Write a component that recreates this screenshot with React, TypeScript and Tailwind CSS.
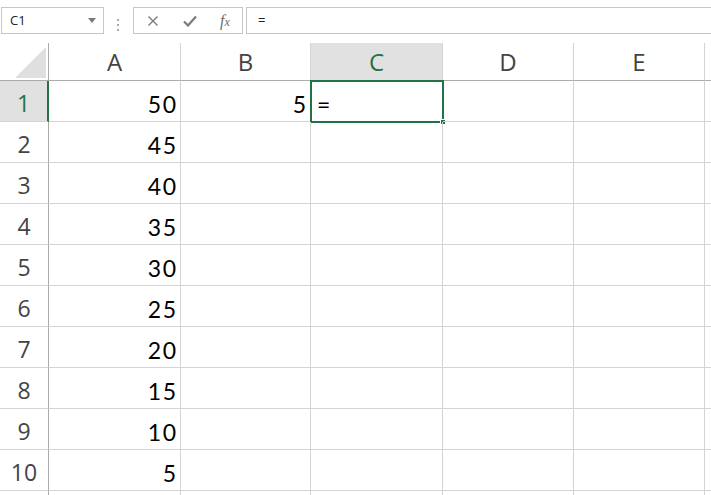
import React from "react";

const COLS = [
  { key: "A", w: "w-[132px]" },
  { key: "B", w: "w-[130px]" },
  { key: "C", w: "w-[132px]" },
  { key: "D", w: "w-[131px]" },
  { key: "E", w: "w-[131px]" },
  { key: "F", w: "w-[131px]" },
];

const VALUES = [50, 45, 40, 35, 30, 25, 20, 15, 10, 5];

const headFont = { fontFamily: '"Open Sans", "Noto Sans", sans-serif' };
const cellFont = { fontFamily: 'Lato, "Liberation Sans", sans-serif' };

function FormulaBar() {
  return (
    <div className="h-[43px] flex pt-[7px] bg-white">
      {/* Name box */}
      <div className="ml-[1px] w-[103px] h-[27px] border border-[#c6c6c6] flex items-center justify-between pl-[8px] pr-[7px]">
        <span className="text-[13px] text-[#222]" style={headFont}>
          C1
        </span>
        <svg width="8" height="5" viewBox="0 0 8 5">
          <path d="M0 0h8L4 5z" fill="#7a7a7a" />
        </svg>
      </div>
      {/* grip dots */}
      <div className="w-[29px] flex flex-col items-center justify-center gap-[3px] pr-[2px]">
        <span className="w-[2px] h-[2px] bg-[#a8a8a8]" />
        <span className="w-[2px] h-[2px] bg-[#a8a8a8]" />
        <span className="w-[2px] h-[2px] bg-[#a8a8a8]" />
      </div>
      {/* cancel / enter / fx */}
      <div className="w-[110px] h-[27px] border border-[#c6c6c6] flex items-center">
        <div className="w-[38px] flex justify-center">
          <svg width="12" height="12" viewBox="0 0 12 12">
            <path d="M1.5 1.5l9 9M10.5 1.5l-9 9" stroke="#7b7b7b" strokeWidth="1.4" fill="none" />
          </svg>
        </div>
        <div className="w-[36px] flex justify-center">
          <svg width="14" height="12" viewBox="0 0 14 12">
            <path d="M1 6.5l4 4L13 1.5" stroke="#7b7b7b" strokeWidth="2.2" fill="none" />
          </svg>
        </div>
        <div className="w-[34px] flex justify-center">
          <span
            className="text-[16px] italic text-[#6d6d6d] leading-none"
            style={{ fontFamily: '"Liberation Serif", serif' }}
          >
            f<span className="text-[12px]">x</span>
          </span>
        </div>
      </div>
      {/* formula input */}
      <div className="ml-[3px] flex-1 h-[27px] border-y border-l border-[#c6c6c6] flex items-center pl-[11px]">
        <span className="text-[13px] text-[#222]" style={headFont}>
          =
        </span>
      </div>
    </div>
  );
}

function HeaderRow() {
  return (
    <div className="flex h-[38px]">
      <div className="w-[49px] shrink-0 border-r border-b border-[#ababab] bg-white relative">
        <svg className="absolute left-[15px] top-[4px]" width="32" height="32" viewBox="0 0 32 32">
          <path d="M31 0V31H0z" fill="#dfdfdf" />
        </svg>
      </div>
      {COLS.map((c) => {
        const active = c.key === "C";
        return (
          <div
            key={c.key}
            className={`${c.w} shrink-0 border-r border-r-[#d4d4d4] border-b border-b-[#ababab] flex items-center justify-center text-[24px] leading-none ${
              active ? "bg-[#e1e1e1] text-[#217346]" : "bg-white text-[#444]"
            }`}
            style={headFont}
          >
            {c.key === "F" ? null : c.key}
          </div>
        );
      })}
    </div>
  );
}

function DataRow({ n, value }: { n: number; value?: number }) {
  const active = n === 1;
  return (
    <div className="flex h-[41px]">
      <div
        className={`w-[49px] shrink-0 border-b border-b-[#d4d4d4] flex items-center justify-center pt-[4px] text-[23px] leading-none ${
          active
            ? "bg-[#e1e1e1] text-[#217346] border-r-2 border-r-[#217346]"
            : "bg-white text-[#444] border-r border-r-[#ababab]"
        }`}
        style={headFont}
      >
        {n > 10 ? null : n}
      </div>
      {COLS.map((c) => {
        let content: React.ReactNode = null;
        let align = "justify-end pr-[4px]";
        if (c.key === "A" && value !== undefined) content = value;
        if (c.key === "B" && active) content = 5;
        if (c.key === "C" && active) {
          content = "=";
          align = "justify-start pl-[6px]";
        }
        return (
          <div
            key={c.key}
            className={`${c.w} shrink-0 relative border-r border-b border-[#d4d4d4] flex items-center ${align} pt-[6px] text-[23px] leading-none text-black`}
            style={cellFont}
          >
            {content !== null && <span className="tracking-[1.5px] mr-[-1.5px]">{content}</span>}
            {c.key === "C" && active && (
              <div className="absolute -left-[1px] -top-[1px] w-[134px] h-[43px] border-2 border-[#217346] pointer-events-none">
                <div className="absolute -right-[4px] -bottom-[4px] w-[6px] h-[6px] bg-[#217346] border border-white" />
              </div>
            )}
          </div>
        );
      })}
    </div>
  );
}

export default function App() {
  return (
    <div className="w-[711px] h-[495px] overflow-hidden bg-white select-none">
      <FormulaBar />
      <HeaderRow />
      {VALUES.map((v, i) => (
        <DataRow key={i} n={i + 1} value={v} />
      ))}
      <DataRow n={11} />
    </div>
  );
}
